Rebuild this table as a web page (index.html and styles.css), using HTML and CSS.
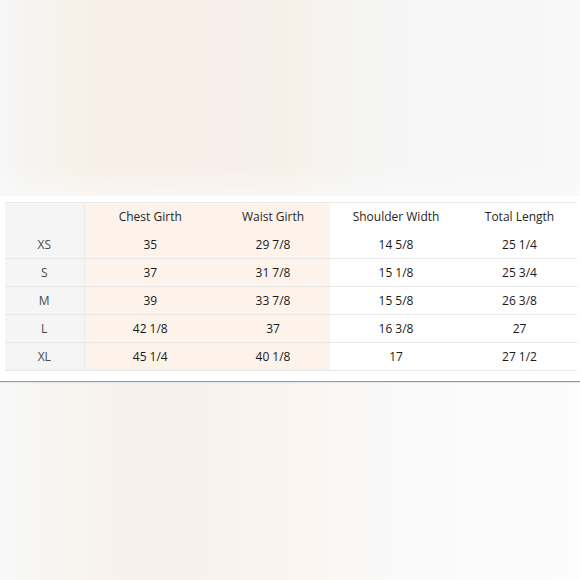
FILE: index.html
```html
<!DOCTYPE html>
<html>
<head>
<meta charset="utf-8">
<link rel="stylesheet" href="styles.css">
</head>
<body>
<div class="page">
  <div class="photo photo-top"></div>
  <div class="band">
    <table class="size-table">
      <colgroup>
        <col class="c-size">
        <col class="c-chest">
        <col class="c-waist">
        <col class="c-shoulder">
        <col class="c-length">
      </colgroup>
      <thead>
        <tr class="head-row">
          <th class="size"></th>
          <th class="warm">Chest Girth</th>
          <th class="warm">Waist Girth</th>
          <th>Shoulder Width</th>
          <th>Total Length</th>
        </tr>
      </thead>
      <tbody>
        <tr><td class="size">XS</td><td class="warm">35</td><td class="warm">29 7/8</td><td>14 5/8</td><td>25 1/4</td></tr>
        <tr><td class="size">S</td><td class="warm">37</td><td class="warm">31 7/8</td><td>15 1/8</td><td>25 3/4</td></tr>
        <tr><td class="size">M</td><td class="warm">39</td><td class="warm">33 7/8</td><td>15 5/8</td><td>26 3/8</td></tr>
        <tr><td class="size">L</td><td class="warm">42 1/8</td><td class="warm">37</td><td>16 3/8</td><td>27</td></tr>
        <tr><td class="size">XL</td><td class="warm">45 1/4</td><td class="warm">40 1/8</td><td>17</td><td>27 1/2</td></tr>
      </tbody>
    </table>
  </div>
  <div class="photo photo-bottom"></div>
</div>
</body>
</html>
```
FILE: styles.css
```css
html, body {
  margin: 0;
  padding: 0;
  background: #ffffff;
}

.page {
  width: 580px;
  height: 580px;
  display: flex;
  flex-direction: column;
  overflow: hidden;
  font-family: "Open Sans", "Liberation Sans", sans-serif;
}

.photo {
  flex: none;
}

.photo-top {
  height: 196px;
  background:
    linear-gradient(to bottom, rgba(255,255,255,0) 85%, rgba(250,250,250,0.6) 100%),
    linear-gradient(to right,
      #f7f7f7 0px,
      #f6f4f2 30px,
      #f7f1ea 70px,
      #f7efe8 130px,
      #f8eee9 200px,
      #f6efe9 260px,
      #f8f1e9 300px,
      #f5f3f1 330px,
      #f5f5f4 360px,
      #f6f6f6 420px,
      #f7f7f7 520px,
      #f8f8f8 580px);
}

.band {
  height: 186px;
  background: #ffffff;
  padding: 6px 3px 0 5px;
  box-sizing: border-box;
  border-bottom: 1px solid #9c9c9c;
  flex: none;
}

.photo-bottom {
  flex: 1;
  border-top: 1px solid #e4e4e4;
  background:
    linear-gradient(to right,
      #f8f8f8 0px,
      #f7f6f4 40px,
      #f8f2ec 110px,
      #f8f0ea 180px,
      #faf3ee 250px,
      #fbf6f0 310px,
      #f9f8f6 340px,
      #f9f9f9 400px,
      #fbfbfb 480px,
      #fcfcfc 580px);
}

.size-table {
  width: 572px;
  border-collapse: collapse;
  table-layout: fixed;
  border-top: 1px solid #ebebeb;
  font-size: 12px;
  color: #1a1a1a;
}

.c-size { width: 79px; }
.c-chest { width: 132px; }
.c-waist { width: 114px; }
.c-shoulder { width: 132px; }
.c-length { width: 115px; }

.size-table th,
.size-table td {
  height: 27px;
  padding: 0;
  text-align: center;
  vertical-align: middle;
  font-weight: 400;
  border-bottom: 1px solid #e8e8e8;
  line-height: 16px;
}

.size-table th {
  color: #262626;
  border-bottom: none;
  height: 28px;
}

.size-table .size {
  background: #f5f5f5;
  color: #4a4a4a;
  border-right: 1px solid #ebebeb;
}

.size-table .warm {
  background: #fdf3ea;
}
```
